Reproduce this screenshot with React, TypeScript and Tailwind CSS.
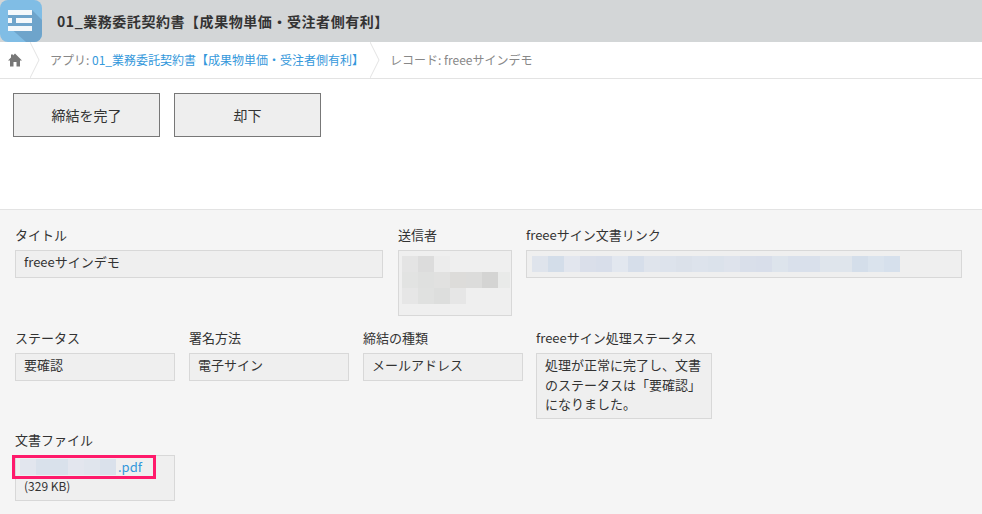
const font = { fontFamily: '"Noto Sans CJK JP", "Noto Sans", sans-serif' };

const senderRows = [
  ["bg-[#e4e4e4]", "bg-[#dcdcdc]", "bg-[#ececec]"],
  ["bg-[#e2e3e2]", "bg-[#dfe0df]", "bg-[#e1e1e0]", "bg-[#dddcda]", "bg-[#dcdcdb]", "bg-[#d4d4d3]", "bg-[#e9eae9]"],
  ["bg-[#e6e6e6]", "bg-[#e0e1e0]", "bg-[#dddedd]", "bg-[#e6e6e6]"],
];
const linkCells = ["bg-[#dfe4ec]", "bg-[#d3dde9]", "bg-[#e2e6ee]", "bg-[#dadfea]", "bg-[#d8deea]", "bg-[#e2e7ef]", "bg-[#d6deea]", "bg-[#dfe4ec]", "bg-[#dde3ec]", "bg-[#dbe1ea]", "bg-[#dde3ec]", "bg-[#dbe2eb]", "bg-[#dee3ec]", "bg-[#d9dfea]", "bg-[#d8deea]", "bg-[#dde4ec]", "bg-[#d9e0eb]", "bg-[#d9e0eb]", "bg-[#dfe5ec]", "bg-[#dfe5ec]", "bg-[#d4deea]", "bg-[#dae3ed]", "bg-[#d6e0ec]"];
const fileCells = ["bg-[#e2e6ee]", "bg-[#d9e1eb]", "bg-[#d9e1eb]", "bg-[#e3e6ee]", "bg-[#e0e5ed]", "bg-[#dae1eb]"];

function Field({ label, className, children }: { label: string; className: string; children: React.ReactNode }) {
  return (
    <div className={className}>
      <div className="h-6 text-[13px] leading-4.5 text-[#333]">{label}</div>
      {children}
    </div>
  );
}

function Box({ className, children }: { className: string; children: React.ReactNode }) {
  return <div className={`border border-[#d8d8d8] bg-[#efefef] text-[13px] leading-normal text-[#333] ${className}`}>{children}</div>;
}

function Chevron() {
  return (
    <svg viewBox="0 0 10 36" className="h-9 w-2.5 shrink-0 text-[#e3e3e3]" fill="none" stroke="currentColor">
      <path d="M0 0 L9 18 L0 36" />
    </svg>
  );
}

export default function App() {
  return (
    <div className="flex min-h-screen flex-col bg-white" style={font}>
      <header className="flex h-10.5 items-center bg-[#d3d6d7]">
        <svg viewBox="0 0 42 42" className="h-10.5 w-10.5 shrink-0">
          <rect width="42" height="42" rx="8" fill="#80bde5" />
          <path d="M32 10 L42 20 V34 A8 8 0 0 1 34 42 H26 L8 26 V15 Z" fill="#6ea4cb" />
          <path d="M8 10h24v5H8zM8 18h4v5H8zM16 18h16v5H16zM8 26h24v5H8z" fill="#f4f8fb" />
        </svg>
        <h1 className="ml-3.5 pl-px text-sm font-bold tracking-[0.04em] text-[#333]">01_業務委託契約書【成果物単価・受注者側有利】</h1>
      </header>

      <nav className="flex items-center border-b border-[#e3e3e3] text-xs text-[#888]">
        <div className="flex w-7.5 justify-center">
          <svg viewBox="0 0 14 13" className="h-3.5 w-3.5 fill-[#777]">
            <path d="M7 0 L14 7 H12 V13 H8.5 V8.5 H5.5 V13 H2 V7 H0 L3 4 V1 H5 V2 Z" />
          </svg>
        </div>
        <Chevron />
        <span className="ml-2.5">
          アプリ: <span className="text-[#3498db]">01_業務委託契約書【成果物単価・受注者側有利】</span>
        </span>
        <span className="ml-1.5">
          <Chevron />
        </span>
        <span className="ml-2.5">レコード: freeeサインデモ</span>
      </nav>

      <div className="flex h-32.5 items-start gap-3.5 pt-3.5 pl-3">
        <button className="ml-px h-11 w-[147px] border border-[#777] bg-[#eee] text-sm text-[#333]">締結を完了</button>
        <button className="h-11 w-[147px] border border-[#777] bg-[#eee] text-sm text-[#333]">却下</button>
      </div>

      <main className="flex-1 border-t border-[#e3e3e3] bg-[#f5f5f5] pt-4 pl-3.5">
        <div className="relative ml-px flex flex-col gap-3">
          <div className="flex gap-3.5">
            <Field label="タイトル" className="w-92">
              <Box className="h-7 px-2 pt-px">freeeサインデモ</Box>
            </Field>
            <Field label="送信者" className="ml-px w-28.5">
              <Box className="h-16.5 px-1 pt-1">
                <div className="mt-px -ml-px flex w-27 flex-col overflow-hidden">
                  {senderRows.map((row, i) => (
                    <div key={i} className="flex h-4">
                      {row.map((c, j) => (
                        <div key={j} className={`w-4 shrink-0 ${c}`} />
                      ))}
                    </div>
                  ))}
                </div>
              </Box>
            </Field>
            <Field label="freeeサイン文書リンク" className="w-109">
              <Box className="h-7 px-1 pt-1">
                <div className="mt-px ml-px flex h-4">
                  {linkCells.map((c, i) => (
                    <div key={i} className={`w-4 ${c}`} />
                  ))}
                </div>
              </Box>
            </Field>
          </div>

          <div className="mt-px flex gap-3.5">
            <Field label="ステータス" className="w-40">
              <Box className="h-7 px-2 pt-px">要確認</Box>
            </Field>
            <Field label="署名方法" className="w-40">
              <Box className="h-7 px-2 pt-px">電子サイン</Box>
            </Field>
            <Field label="締結の種類" className="w-40">
              <Box className="h-7 px-2 pt-px">メールアドレス</Box>
            </Field>
            <Field label="freeeサイン処理ステータス" className="-ml-px w-44">
              <Box className="h-16.5 px-2 pt-px">処理が正常に完了し、文書のステータスは「要確認」になりました。</Box>
            </Field>
          </div>

          <Field label="文書ファイル" className="w-40">
            <Box className="relative h-11.5 px-2">
              <div className="flex h-5.5 items-center">
                <div className="flex h-4 -translate-x-1">
                  {fileCells.map((c, i) => (
                    <div key={i} className={`w-4 ${c}`} />
                  ))}
                </div>
                <span className="-translate-x-0.5 text-[#3498db]">.pdf</span>
              </div>
              <div className="text-xs leading-4">(329 KB)</div>
              <div className="absolute -top-px -left-1 h-6 w-36 border-3 border-[#ff1a6b]" />
            </Box>
          </Field>
        </div>
      </main>
    </div>
  );
}
